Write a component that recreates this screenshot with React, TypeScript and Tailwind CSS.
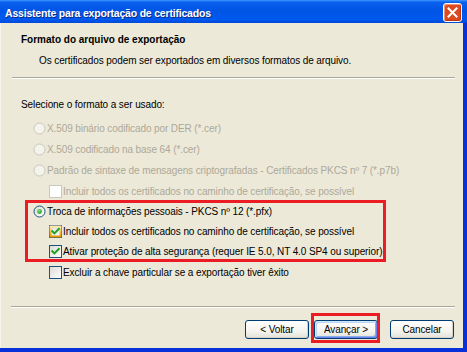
import React from "react";

function Radio({ checked = false, disabled = false }: { checked?: boolean; disabled?: boolean }) {
  return (
    <svg width="13" height="13" viewBox="0 0 13 13" className="shrink-0">
      <defs>
        <linearGradient id="rfill" x1="0" y1="0" x2="1" y2="1">
          <stop offset="0" stopColor="#DCDAD0" />
          <stop offset="1" stopColor="#FFFFFF" />
        </linearGradient>
        <radialGradient id="rdot" cx="0.4" cy="0.35" r="0.7">
          <stop offset="0" stopColor="#7BE27A" />
          <stop offset="1" stopColor="#1B9A1B" />
        </radialGradient>
      </defs>
      <circle
        cx="6.5"
        cy="6.5"
        r="5.5"
        fill={disabled ? "#F4F3EC" : "url(#rfill)"}
        stroke={disabled ? "#CAC8BB" : "#1C5180"}
        strokeWidth="1"
      />
      {checked && <circle cx="6.5" cy="6.5" r="2.4" fill="url(#rdot)" />}
    </svg>
  );
}

function Check({
  checked = false,
  disabled = false,
  hover = false,
}: {
  checked?: boolean;
  disabled?: boolean;
  hover?: boolean;
}) {
  return (
    <svg width="13" height="13" viewBox="0 0 13 13" className="shrink-0">
      <defs>
        <linearGradient id="cfill" x1="0" y1="0" x2="1" y2="1">
          <stop offset="0" stopColor="#DCDBD5" />
          <stop offset="1" stopColor="#FFFFFF" />
        </linearGradient>
        <linearGradient id="chov" x1="0" y1="0" x2="0" y2="1">
          <stop offset="0" stopColor="#FFE8A6" />
          <stop offset="1" stopColor="#E59700" />
        </linearGradient>
      </defs>
      <rect
        x="0.5"
        y="0.5"
        width="12"
        height="12"
        fill={disabled ? "#FFFFFF" : "url(#cfill)"}
        stroke={disabled ? "#CAC8BB" : "#1C5180"}
      />
      {hover && <rect x="1.5" y="1.5" width="10" height="10" fill="none" stroke="url(#chov)" strokeWidth="2" />}
      {checked && (
        <path d="M3.3 6.2 L5.4 8.4 L9.8 3.9" fill="none" stroke="#21A121" strokeWidth="2" strokeLinecap="square" />
      )}
    </svg>
  );
}

function RadioRow({
  label,
  checked,
  disabled,
  h,
}: {
  label: string;
  checked?: boolean;
  disabled?: boolean;
  h: string;
}) {
  return (
    <div className={`flex items-center pl-[32px] gap-[1px] ${h}`}>
      <Radio checked={checked} disabled={disabled} />
      <span className={`whitespace-nowrap ${disabled ? "text-[#ACA899]" : "text-black"}`}>{label}</span>
    </div>
  );
}

function CheckRow({
  label,
  checked,
  disabled,
  hover,
  h,
}: {
  label: string;
  checked?: boolean;
  disabled?: boolean;
  hover?: boolean;
  h: string;
}) {
  return (
    <div className={`flex items-center pl-[48px] gap-[1px] ${h}`}>
      <Check checked={checked} disabled={disabled} hover={hover} />
      <span className={`whitespace-nowrap ${disabled ? "text-[#ACA899]" : "text-black"}`}>{label}</span>
    </div>
  );
}

function Button({ label, def = false }: { label: string; def?: boolean }) {
  return (
    <div
      className={`flex h-[19px] w-[64px] items-center justify-center rounded-[3px] border border-[#003C74] bg-[linear-gradient(#FFFFFF,#F4F3EE_60%,#E3E1D7)] text-black ${
        def
          ? "shadow-[inset_1px_1px_0_#CEE7FF,inset_-1px_-1px_0_#6982EE,inset_2px_2px_0_#BCD4F6,inset_-2px_-2px_0_#89ADE4]"
          : "shadow-[inset_-1px_-1px_0_#D6D0C5]"
      }`}
    >
      {label}
    </div>
  );
}

function CloseButton() {
  return (
    <div className="mt-[3px] flex h-[19px] w-[19px] shrink-0 items-center justify-center rounded-[3px] border border-white bg-[#DD4A1F] shadow-[inset_1px_1px_0_#F0957A,inset_-1px_-1px_0_#B8340E]">
      <svg width="11" height="11" viewBox="0 0 11 11">
        <path d="M1.5 1.5 L9.5 9.5 M9.5 1.5 L1.5 9.5" stroke="#FFFFFF" strokeWidth="2" strokeLinecap="square" />
      </svg>
    </div>
  );
}

export default function App() {
  return (
    <div className="flex h-[352px] w-[467px] flex-col overflow-hidden bg-[#0831D9] font-['Liberation_Sans',Arial,sans-serif] text-[10px] leading-[13px] tracking-[-0.1px]">
      {/* title bar */}
      <div className="flex h-[23px] shrink-0 items-start justify-between bg-[linear-gradient(#3D95FF_0%,#0A61EE_10%,#0055E5_45%,#0058EE_85%,#0048D8_100%)] pl-[5px] pr-[5px]">
        <span className="pt-[6px] text-[10.5px] font-bold leading-[14px] tracking-[-0.2px] text-white [text-shadow:1px_1px_#0A2A8A]">
          Assistente para exportação de certificados
        </span>
        <CloseButton />
      </div>

      {/* body */}
      <div className="mr-[4px] mb-[4px] flex flex-1 flex-col bg-[#ECE9D8] border-l border-[#F5F3EA]">
        <div className="pt-[10px] pl-[20px] font-bold tracking-normal text-black">Formato do arquivo de exportação</div>
        <div className="mt-[8px] pl-[38px] text-black">
          Os certificados podem ser exportados em diversos formatos de arquivo.
        </div>
        <div className="mt-[10px] ml-[11px] mr-[8px] h-[2px] border-t border-b border-t-[#ACA899] border-b-white" />

        <div className="mt-[19px] pl-[20px] text-black">Selecione o formato a ser usado:</div>

        <div className="mt-[7px] flex flex-col">
          <RadioRow h="h-[21px]" disabled label="X.509 binário codificado por DER (*.cer)" />
          <RadioRow h="h-[21px]" disabled label="X.509 codificado na base 64 (*.cer)" />
          <RadioRow
            h="h-[20px]"
            disabled
            label="Padrão de sintaxe de mensagens criptografadas - Certificados PKCS nº 7 (*.p7b)"
          />
          <CheckRow h="h-[22px]" disabled label="Incluir todos os certificados no caminho de certificação, se possível" />
          <div className="relative flex flex-col">
            <RadioRow h="h-[19px]" checked label="Troca de informações pessoais - PKCS nº 12 (*.pfx)" />
            <CheckRow
              h="h-[20px]"
              checked
              hover
              label="Incluir todos os certificados no caminho de certificação, se possível"
            />
            <CheckRow
              h="h-[21px]"
              checked
              label="Ativar proteção de alta segurança (requer IE 5.0, NT 4.0 SP4 ou superior)"
            />
            <div className="pointer-events-none absolute top-[-2px] left-[24px] h-[62px] w-[361px] border-[3px] border-[#EC1C24]" />
          </div>
          <CheckRow h="h-[20px]" label="Excluir a chave particular se a exportação tiver êxito" />
        </div>

        <div className="mt-auto">
          <div className="ml-[10px] mr-[8px] h-[2px] border-t border-b border-t-[#ACA899] border-b-white" />
          <div className="mt-[12px] mb-[9px] flex justify-end pr-[9px]">
            <Button label="< Voltar" />
            <div className="relative ml-[5px]">
              <Button label="Avançar >" def />
              <div className="pointer-events-none absolute top-[-7px] left-[-3px] h-[30px] w-[69px] border-[3px] border-[#EC1C24]" />
            </div>
            <div className="ml-[12px]">
              <Button label="Cancelar" />
            </div>
          </div>
        </div>
      </div>
    </div>
  );
}
